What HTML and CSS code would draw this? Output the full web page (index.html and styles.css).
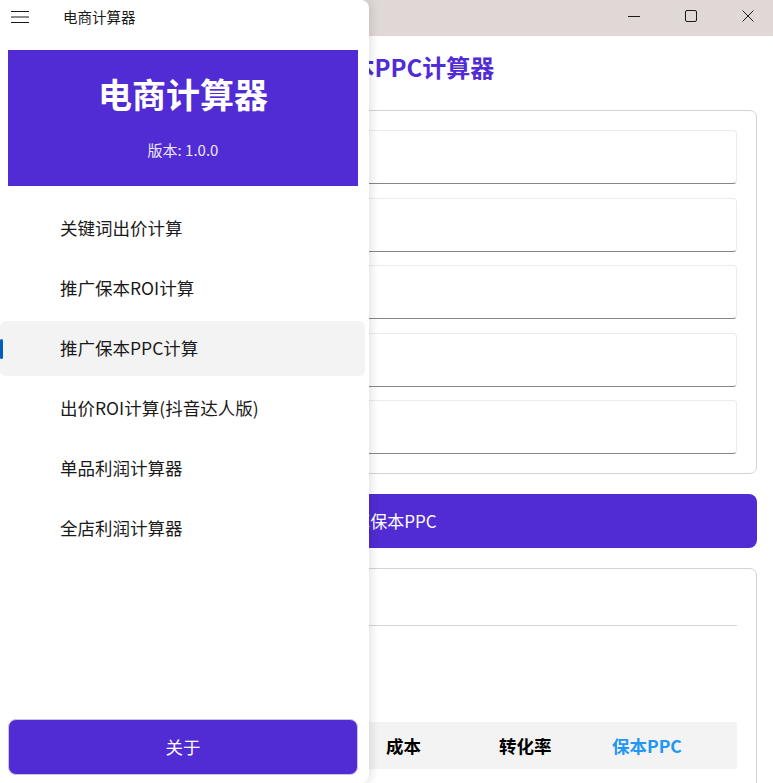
FILE: index.html
```html
<!DOCTYPE html>
<html lang="zh-CN">
<head>
<meta charset="utf-8">
<title>电商计算器</title>
<link rel="stylesheet" href="styles.css">
</head>
<body>
<div class="app">
  <div class="titlebar">
    <span class="win-btn">
      <svg width="12" height="12" viewBox="0 0 12 12"><path d="M0 6.5H12" stroke="#1a1a1a" stroke-width="1"/></svg>
    </span>
    <span class="win-btn">
      <svg width="12" height="12" viewBox="0 0 12 12"><rect x="0.5" y="0.5" width="11" height="11" rx="1.5" fill="none" stroke="#1a1a1a" stroke-width="1"/></svg>
    </span>
    <span class="win-btn">
      <svg width="12" height="12" viewBox="0 0 12 12"><path d="M0.5 0.5L11.5 11.5M11.5 0.5L0.5 11.5" stroke="#1a1a1a" stroke-width="1"/></svg>
    </span>
  </div>
  <main class="content">
    <h1 class="page-title">推广保本PPC计算器</h1>
    <section class="card inputs">
      <div class="entry"></div>
      <div class="entry"></div>
      <div class="entry"></div>
      <div class="entry"></div>
      <div class="entry"></div>
    </section>
    <button class="primary-btn">计算保本PPC</button>
    <section class="card result">
      <div class="result-title"></div>
      <div class="divider"></div>
      <div class="result-body"></div>
      <div class="table-head">
        <span></span>
        <span></span>
        <span></span>
        <span>成本</span>
        <span>转化率</span>
        <span class="hl">保本PPC</span>
      </div>
    </section>
  </main>
</div>

<aside class="drawer">
  <div class="drawer-top">
    <svg class="hamburger" width="18" height="12" viewBox="0 0 18 12"><path d="M0 0.5H18M0 6H18M0 11.5H18" stroke="#1a1a1a" stroke-width="1.1"/></svg>
    <span class="drawer-app">电商计算器</span>
  </div>
  <div class="drawer-header">
    <div class="drawer-title">电商计算器</div>
    <div class="drawer-version">版本: 1.0.0</div>
  </div>
  <nav class="menu">
    <div class="menu-item"><div class="menu-bg">关键词出价计算</div></div>
    <div class="menu-item"><div class="menu-bg">推广保本ROI计算</div></div>
    <div class="menu-item selected"><div class="menu-bg"><span class="indicator"></span>推广保本PPC计算</div></div>
    <div class="menu-item"><div class="menu-bg">出价ROI计算(抖音达人版)</div></div>
    <div class="menu-item"><div class="menu-bg">单品利润计算器</div></div>
    <div class="menu-item"><div class="menu-bg">全店利润计算器</div></div>
  </nav>
  <button class="about-btn">关于</button>
</aside>
</body>
</html>
```

FILE: styles.css
```css
* { box-sizing: border-box; }

html, body {
  margin: 0;
  padding: 0;
}

body {
  width: 773px;
  height: 783px;
  overflow: hidden;
  position: relative;
  background: #ffffff;
  font-family: "Noto Sans CJK SC", "Noto Sans", "Liberation Sans", sans-serif;
  color: #1a1a1a;
}

/* ---------- background window ---------- */
.app {
  width: 773px;
  height: 783px;
  display: flex;
  flex-direction: column;
}

.titlebar {
  height: 36px;
  flex: none;
  background: #e0d8d6;
  display: flex;
  justify-content: flex-end;
  align-items: flex-start;
  gap: 45px;
  padding: 10px 19px 0 0;
}

.win-btn {
  width: 12px;
  height: 12px;
  display: block;
}
.win-btn svg { display: block; }

.content {
  padding: 0 16px;
  display: flex;
  flex-direction: column;
}

.page-title {
  margin: 15px 0 0;
  font-size: 24px;
  line-height: 32px;
  font-weight: 700;
  color: #512bd4;
  text-align: center;
}

.card {
  border: 1px solid #d3d3d3;
  border-radius: 7px;
  padding: 19px 19px;
  background: #fff;
}

.inputs {
  margin-top: 27px;
  display: flex;
  flex-direction: column;
  gap: 13.5px;
}

.entry {
  height: 54px;
  border: 1px solid #ebebeb;
  border-bottom: 1px solid #868686;
  border-radius: 4px;
}

.primary-btn {
  margin-top: 20px;
  height: 54px;
  border: none;
  border-radius: 8px;
  background: #512bd4;
  color: #fff;
  font-family: inherit;
  font-size: 17px;
  line-height: 24px;
}

.result {
  margin-top: 20px;
  padding-bottom: 0;
  height: 240px;
}

.result-title {
  height: 37px;
}

.divider {
  height: 1px;
  background: #d4d4d4;
}

.result-body {
  height: 96px;
}

.table-head {
  height: 47px;
  background: #f3f3f3;
  display: grid;
  grid-template-columns: repeat(6, 1fr);
  align-items: center;
  padding: 0 12px 0 11px;
  font-size: 17.5px;
  font-weight: 700;
  color: #000;
}
.table-head .hl { color: #2196f3; }

/* ---------- drawer overlay ---------- */
.drawer {
  position: absolute;
  left: 0;
  top: 0;
  width: 369px;
  height: 783px;
  background: #fff;
  border-radius: 0 8px 8px 0;
  box-shadow: 2px 0 10px rgba(0, 0, 0, 0.12);
  display: flex;
  flex-direction: column;
}

.drawer-top {
  height: 34px;
  flex: none;
  display: flex;
  align-items: center;
  padding-left: 11px;
}
.hamburger { display: block; }
.drawer-app {
  margin-left: 34px;
  font-size: 14.5px;
  line-height: 20px;
  color: #1a1a1a;
}

.drawer-header {
  margin: 16px 11px 0 8px;
  height: 136px;
  background: #512bd4;
  color: #fff;
  display: flex;
  flex-direction: column;
  align-items: center;
  padding-top: 22px;
}
.drawer-title {
  font-size: 34px;
  line-height: 44px;
  font-weight: 700;
}
.drawer-version {
  margin-top: 24px;
  font-size: 15px;
  line-height: 20px;
  color: #ece8fb;
}

.menu {
  margin-top: 12px;
  display: flex;
  flex-direction: column;
}
.menu-item {
  height: 60px;
  padding: 2.5px 4px 2.5px 0;
}
.menu-bg {
  position: relative;
  height: 55px;
  border-radius: 6px;
  display: flex;
  align-items: center;
  padding-left: 60px;
  font-size: 17.5px;
  line-height: 24px;
  color: #1a1a1a;
}
.menu-item.selected .menu-bg { background: #f3f3f3; }
.indicator {
  position: absolute;
  left: 0;
  top: 18px;
  width: 3px;
  height: 20px;
  border-radius: 2px;
  background: #005fb8;
}

.about-btn {
  margin: auto 11px 8px 8px;
  height: 56px;
  border: 1px solid #c9c4d8;
  border-radius: 8px;
  background: #512bd4;
  color: #fff;
  font-family: inherit;
  font-size: 17.5px;
  line-height: 24px;
}
```
